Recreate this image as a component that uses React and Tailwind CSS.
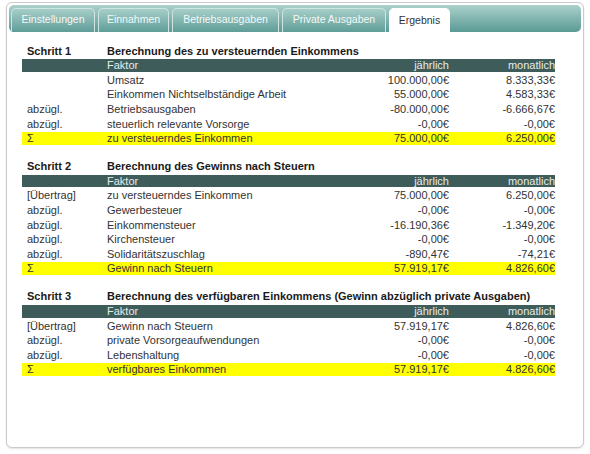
import React from 'react';

const tabs = [
  { label: 'Einstellungen', w: 'w-[84px]' },
  { label: 'Einnahmen', w: 'w-[71px]' },
  { label: 'Betriebsausgaben', w: 'w-[107px]' },
  { label: 'Private Ausgaben', w: 'w-[104px]' },
  { label: 'Ergebnis', w: 'w-[61px]', active: true },
];

const sections = [
  {
    step: 'Schritt 1',
    title: 'Berechnung des zu versteuernden Einkommens',
    rows: [
      ['', 'Umsatz', '100.000,00€', '8.333,33€'],
      ['', 'Einkommen Nichtselbständige Arbeit', '55.000,00€', '4.583,33€'],
      ['abzügl.', 'Betriebsausgaben', '-80.000,00€', '-6.666,67€'],
      ['abzügl.', 'steuerlich relevante Vorsorge', '-0,00€', '-0,00€'],
    ],
    sum: ['Σ', 'zu versteuerndes Einkommen', '75.000,00€', '6.250,00€'],
  },
  {
    step: 'Schritt 2',
    title: 'Berechnung des Gewinns nach Steuern',
    rows: [
      ['[Übertrag]', 'zu versteuerndes Einkommen', '75.000,00€', '6.250,00€'],
      ['abzügl.', 'Gewerbesteuer', '-0,00€', '-0,00€'],
      ['abzügl.', 'Einkommensteuer', '-16.190,36€', '-1.349,20€'],
      ['abzügl.', 'Kirchensteuer', '-0,00€', '-0,00€'],
      ['abzügl.', 'Solidaritätszuschlag', '-890,47€', '-74,21€'],
    ],
    sum: ['Σ', 'Gewinn nach Steuern', '57.919,17€', '4.826,60€'],
  },
  {
    step: 'Schritt 3',
    title: 'Berechnung des verfügbaren Einkommens (Gewinn abzüglich private Ausgaben)',
    rows: [
      ['[Übertrag]', 'Gewinn nach Steuern', '57.919,17€', '4.826,60€'],
      ['abzügl.', 'private Vorsorgeaufwendungen', '-0,00€', '-0,00€'],
      ['abzügl.', 'Lebenshaltung', '-0,00€', '-0,00€'],
    ],
    sum: ['Σ', 'verfügbares Einkommen', '57.919,17€', '4.826,60€'],
  },
];

const Row = ({ cells, className = '' }) => (
  <div className={`grid grid-cols-[80px_1fr_100px_106px] h-[12.6px] leading-[12.6px] ${className}`}>
    <div className="pl-[5px] whitespace-nowrap">{cells[0]}</div>
    <div className="pl-[5px] whitespace-nowrap">{cells[1]}</div>
    <div className="text-right whitespace-nowrap">{cells[2]}</div>
    <div className="text-right whitespace-nowrap">{cells[3]}</div>
  </div>
);

const Section = ({ section, first }) => (
  <div className={`flex flex-col gap-[2px] ${first ? '' : 'mt-[15.4px]'}`}>
    <div className="grid grid-cols-[80px_1fr] h-[12.6px] leading-[12.6px] font-bold text-[#1a1a1a]">
      <div className="pl-[5px]">{section.step}</div>
      <div className="pl-[5px] whitespace-nowrap">{section.title}</div>
    </div>
    <Row cells={['', 'Faktor', 'jährlich', 'monatlich']} className="bg-[#3e5d5a] text-[#e4ecea]" />
    {section.rows.map((r, i) => (
      <Row key={i} cells={r} className="text-[#333]" />
    ))}
    <Row cells={section.sum} className="bg-[#ffff00] text-[#333]" />
  </div>
);

export default function App() {
  return (
    <div
      className="w-[590px] h-[454px] bg-white pt-[2px] pl-[6px]"
      style={{ fontFamily: '"Liberation Sans", Arial, sans-serif' }}
    >
      <div className="w-[578px] h-[446px] rounded-[6px] border border-[#cacaca] bg-white p-[2px] shadow-[0_1px_2px_rgba(0,0,0,0.12)]">
        {/* Tab bar */}
        <div className="h-[27px] rounded-[5px] bg-gradient-to-b from-[#abd1cc] to-[#5a9a95] flex items-end gap-[3px] pl-[2px]">
          {tabs.map((t) => (
            <div
              key={t.label}
              className={`${t.w} h-[24px] rounded-t-[5px] border border-b-0 flex items-center justify-center text-[10.5px] pb-[1px] ${
                t.active
                  ? 'bg-white border-white text-[#333] h-[25px] -mb-[1px]'
                  : 'bg-gradient-to-b from-[#a6cec9] to-[#5f9d98] border-[#cfe5e2] text-[#f3f9f8]'
              }`}
            >
              {t.label}
            </div>
          ))}
        </div>

        {/* Content */}
        <div className="pl-[13px] pt-[12.7px] w-[546px] text-[11px]">
          {sections.map((s, i) => (
            <Section key={s.step} section={s} first={i === 0} />
          ))}
        </div>
      </div>
    </div>
  );
}
